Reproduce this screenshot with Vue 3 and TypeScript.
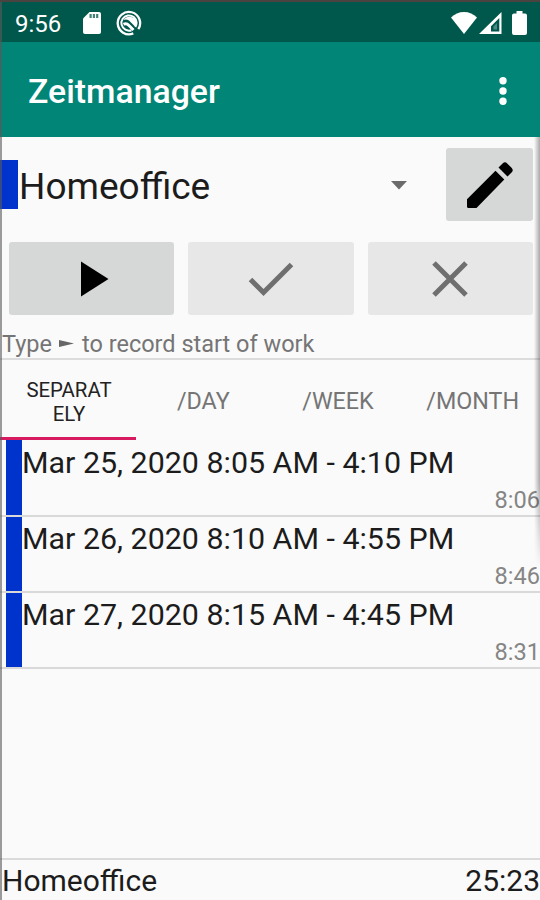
<script setup lang="ts">
interface Entry {
  range: string
  duration: string
}

const project = 'Homeoffice'
const total = '25:23'
const tabs: string[] = ['SEPARAT\nELY', '/DAY', '/WEEK', '/MONTH']
const entries: Entry[] = [
  { range: 'Mar 25, 2020 8:05 AM - 4:10 PM', duration: '8:06' },
  { range: 'Mar 26, 2020 8:10 AM - 4:55 PM', duration: '8:46' },
  { range: 'Mar 27, 2020 8:15 AM - 4:45 PM', duration: '8:31' },
]
</script>

<template>
  <div class="screen">
    <div class="status">
      <span class="clock">9:56</span>
      <svg class="sd" width="18" height="22" viewBox="0 0 18 22">
        <path fill="#fff" d="M6.500 0H16a2 2 0 0 1 2 2v18a2 2 0 0 1-2 2H2a2 2 0 0 1-2-2V6.500Z" />
        <path fill="#00574b" opacity=".75" d="M6.500 2h2.200v4H6.500zM9.800 2H12v4H9.800zM13.100 2h2.200v4h-2.200z" />
      </svg>
      <svg class="ring" width="26" height="26" viewBox="0 0 26 26" fill="none" stroke="#fff">
        <path stroke-width="2.300" d="M17.300 23.400A11.200 11.200 0 1 1 22.300 19.200" />
        <path stroke-width="2" d="M15.500 20.200A7.600 7.600 0 1 1 20.600 12.500Q20.600 15 19.400 17" />
        <path fill="#fff" stroke="none" d="M7.500 10C10 6 16 5.500 19.500 9.500 20.500 12 20.500 14 19.500 17L13 10.500Q10.500 9 7.500 10Z" />
        <path stroke-width="2.800" d="M7.500 14.300Q10.500 12.800 13 15.500L17.500 20" />
      </svg>
      <span class="grow"></span>
      <svg class="wifi" width="26" height="22" viewBox="0 0 26 22">
        <path fill="#fff" d="M13 22 0 5.500C3.500 2 8 0 13 0s9.500 2 13 5.500Z" />
      </svg>
      <svg class="signal" width="23" height="22" viewBox="0 0 23 22">
        <path fill="#fff" fill-rule="evenodd" d="M0 22 22.500 0v22ZM12 19.500H20.300V6L12 14.200Z" />
        <path fill="#fff" opacity=".3" d="M14.500 14.500 18 11v6.500h-3.500z" />
      </svg>
      <svg class="battery" width="15" height="24" viewBox="0 0 15 24">
        <path fill="#fff" d="M4.500 0h6v2.500H13a2 2 0 0 1 2 2V22a2 2 0 0 1-2 2H2a2 2 0 0 1-2-2V4.500a2 2 0 0 1 2-2h2.500Z" />
      </svg>
    </div>

    <header class="appbar">
      <h1>Zeitmanager</h1>
      <svg width="8" height="30" viewBox="0 0 8 30" fill="#fff">
        <circle cx="4" cy="4.700" r="3.700" />
        <circle cx="4" cy="15" r="3.700" />
        <circle cx="4" cy="25.300" r="3.700" />
      </svg>
    </header>

    <main class="body">
      <div class="project">
        <span class="swatch"></span>
        <span class="name">{{ project }}</span>
        <svg class="caret" width="16" height="9" viewBox="0 0 16 9">
          <path fill="#6b6b6b" d="M0 0h16L8 8.500Z" />
        </svg>
        <button class="btn edit" aria-label="Edit">
          <svg width="48" height="48" viewBox="0 0 48 48">
            <path d="M1 38.200 29.500 9.700 38.300 18.500 10.500 47H2.500Q1 47 1 45.500ZM32.500 6.500 36.600 2.400Q39 .2 41.200 2.400L45.800 7Q47.700 9.300 45.800 11.300L41.500 15.500Z" />
          </svg>
        </button>
      </div>

      <div class="actions">
        <button class="btn" aria-label="Start">
          <svg class="play" width="28" height="36" viewBox="0 0 28 36"><path d="M0 .5v35L27.500 18Z" /></svg>
        </button>
        <button class="btn off" aria-label="Confirm">
          <svg width="46" height="36" viewBox="0 0 46 36" fill="none" stroke="#6f6f6f" stroke-width="5">
            <path d="M2.500 18.500 15.500 31.500 43.500 3.500" />
          </svg>
        </button>
        <button class="btn off" aria-label="Cancel">
          <svg width="36" height="36" viewBox="0 0 36 36" fill="none" stroke="#6f6f6f" stroke-width="5">
            <path d="M2 2l32 32M34 2 2 34" />
          </svg>
        </button>
      </div>

      <p class="hint">
        <span>Type</span>
        <svg width="15" height="7" viewBox="0 0 15 7"><path fill="#666" d="M0 0 15 3.500 0 7Z" /></svg>
        <span>to record start of work</span>
      </p>

      <nav class="tabs">
        <div v-for="(tab, i) in tabs" :key="tab" class="tab" :class="{ active: i === 0 }">{{ tab }}</div>
      </nav>

      <ul class="list">
        <li v-for="entry in entries" :key="entry.range">
          <span class="bar"></span>
          <span class="range">{{ entry.range }}</span>
          <span class="duration">{{ entry.duration }}</span>
        </li>
      </ul>

      <footer class="total">
        <span>{{ project }}</span>
        <span>{{ total }}</span>
      </footer>
    </main>
    <div class="edge"></div>
    <div class="shade"></div>
  </div>
</template>

<style>
body {
  margin: 0;
}
</style>

<style scoped>
.screen {
  position: relative;
  box-sizing: border-box;
  width: 540px;
  height: 900px;
  overflow: hidden;
  display: flex;
  flex-direction: column;
  border-top: 2px solid #4b4340;
  background: #fafafa;
  color: #1c1c1c;
  font-family: Roboto, 'Liberation Sans', sans-serif;
}
.status {
  flex: none;
  display: flex;
  align-items: center;
  box-sizing: border-box;
  height: 40px;
  padding: 2px 13px 0 15px;
  background: #00574b;
  color: #fff;
}
.clock {
  width: 68px;
  padding-top: 1px;
  font-size: 24px;
  line-height: 28px;
}
.ring {
  margin-left: 15px;
}
.grow {
  flex: 1;
}
.signal {
  margin-left: 2px;
}
.battery {
  margin-left: 10px;
}
.appbar {
  flex: none;
  display: flex;
  align-items: center;
  justify-content: space-between;
  box-sizing: border-box;
  height: 95px;
  padding: 3px 33px 0 28px;
  background: #008577;
  color: #fff;
}
h1 {
  margin: 0;
  padding-top: 2px;
  font-size: 33.800px;
  font-weight: 500;
  line-height: 40px;
}
.body {
  flex: 1;
  min-height: 0;
  display: flex;
  flex-direction: column;
}
.project {
  display: flex;
  align-items: center;
  height: 73px;
  margin: 11px 7px 0 0;
}
.swatch {
  width: 18px;
  height: 49px;
  background: #0033cc;
}
.name {
  flex: 1;
  padding: 4px 0 0 1px;
  font-size: 37px;
  line-height: 44px;
}
.caret {
  margin: 2px 39px 0 0;
}
.btn {
  display: flex;
  align-items: center;
  justify-content: center;
  height: 73px;
  padding: 0;
  border: 0;
  border-radius: 3px;
  background: #d6d8d7;
}
.edit {
  width: 87px;
}
.actions {
  display: grid;
  grid-template-columns: repeat(3, 1fr);
  gap: 14px;
  margin: 21px 7px 0 9px;
}
.off {
  background: #e7e7e7;
}
.play {
  margin-left: 6px;
}
.hint {
  display: flex;
  align-items: center;
  box-sizing: border-box;
  height: 45px;
  margin: 0;
  padding: 14px 0 0 2px;
  border-bottom: 2px solid #dcdcdc;
  color: #757575;
  font-size: 23.500px;
  line-height: 28px;
}
.hint svg {
  margin: 0 8px 0 7px;
}
.tabs {
  display: grid;
  grid-template-columns: 136px repeat(3, 1fr);
  height: 80px;
}
.tab {
  display: flex;
  align-items: center;
  justify-content: center;
  box-sizing: border-box;
  padding-top: 1px;
  color: #757575;
  font-size: 23.300px;
  line-height: 24px;
  text-align: center;
  white-space: pre;
}
.tab.active {
  padding: 6px 0 0 2px;
  border-bottom: 3px solid #d81b60;
  color: #222;
  font-size: 20.400px;
}
.list {
  flex: 1;
  margin: 0;
  padding: 0;
  list-style: none;
}
li {
  display: grid;
  grid-template-columns: 16px 1fr;
  grid-template-rows: 43px 31px;
  padding-left: 5.500px;
  border-bottom: 2px solid #d9d9d9;
}
li:first-child {
  grid-template-rows: 44px 31px;
}
.bar {
  grid-row: 1 / 3;
  background: #0033cc;
}
.range {
  padding-left: 0.500px;
  font-size: 30.400px;
  line-height: 43px;
}
li:first-child .range {
  line-height: 45px;
}
.duration {
  color: #858585;
  font-size: 23.600px;
  line-height: 33px;
  text-align: right;
}
.total {
  display: flex;
  justify-content: space-between;
  box-sizing: border-box;
  height: 42px;
  padding-left: 2px;
  border-top: 2px solid #dadada;
  font-size: 30px;
  line-height: 42px;
}
.edge {
  position: absolute;
  top: 0;
  left: 0;
  width: 2px;
  height: 100%;
  background: rgba(90, 90, 90, 0.6);
}
.shade {
  position: absolute;
  top: 135px;
  right: 0;
  width: 6px;
  height: 430px;
  background: linear-gradient(to right, rgba(0, 0, 0, 0), rgba(0, 0, 0, 0.32));
  mask-image: linear-gradient(#000 80%, transparent);
}
</style>
